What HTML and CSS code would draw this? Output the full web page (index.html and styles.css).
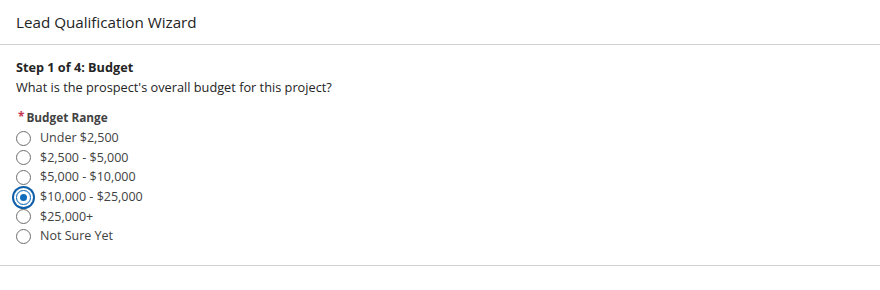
FILE: index.html
```html
<!DOCTYPE html>
<html>
<head>
<meta charset="utf-8">
<link rel="stylesheet" href="styles.css">
</head>
<body>
<div class="wizard">
  <div class="wizard-header">Lead Qualification Wizard</div>
  <div class="wizard-body">
    <div class="step-title">Step 1 of 4: Budget</div>
    <div class="step-desc">What is the prospect's overall budget for this project?</div>
    <fieldset class="field">
      <legend class="field-label"><span class="req">*</span>Budget Range</legend>
      <label class="radio"><span class="dot"></span><span class="opt">Under $2,500</span></label>
      <label class="radio"><span class="dot"></span><span class="opt">$2,500 - $5,000</span></label>
      <label class="radio"><span class="dot"></span><span class="opt">$5,000 - $10,000</span></label>
      <label class="radio checked"><span class="dot"></span><span class="opt">$10,000 - $25,000</span></label>
      <label class="radio"><span class="dot"></span><span class="opt">$25,000+</span></label>
      <label class="radio"><span class="dot"></span><span class="opt">Not Sure Yet</span></label>
    </fieldset>
  </div>
</div>
</body>
</html>
```

FILE: styles.css
```css
html, body {
  margin: 0;
  padding: 0;
  background: #fff;
}
body {
  font-family: "Open Sans", "Noto Sans", sans-serif;
  color: #242424;
}
.wizard {
  width: 880px;
  border-bottom: 1px solid #d1d1d1;
}
.wizard-header {
  height: 45px;
  box-sizing: border-box;
  padding: 0 16px 1px;
  display: flex;
  align-items: center;
  font-size: 15.2px;
  border-bottom: 1px solid #d1d1d1;
  color: #242424;
}
.wizard-body {
  padding: 12px 16px 19px;
}
.step-title {
  font-weight: 700;
  font-size: 12.7px;
  line-height: 20px;
}
.step-desc {
  font-size: 12.75px;
  line-height: 20px;
}
.field {
  border: 0;
  margin: 10px 0 0;
  padding: 0;
}
.field-label {
  padding: 0;
  margin-bottom: 1px;
  font-weight: 700;
  font-size: 11.8px;
  line-height: 20px;
  color: #424242;
  display: flex;
  align-items: center;
}
.req {
  color: #c4314b;
  margin: -3px 2px 0 2px;
  font-weight: 700;
}
.radio {
  display: flex;
  align-items: center;
  height: 19.6px;
}
.dot {
  width: 15px;
  height: 15px;
  box-sizing: border-box;
  border: 1px solid #6e6e6e;
  border-radius: 50%;
  margin: 1px 9px 0 0;
  flex: none;
  position: relative;
}
.radio.checked .dot {
  border-color: #0f6cbd;
  box-shadow: 0 0 0 2px #fff, 0 0 0 4px #0f5fa8;
}
.radio.checked .dot::after {
  content: "";
  position: absolute;
  left: 3px;
  top: 3px;
  width: 7px;
  height: 7px;
  border-radius: 50%;
  background: #0f6cbd;
}
.opt {
  font-size: 12.5px;
  color: #424242;
}
```
